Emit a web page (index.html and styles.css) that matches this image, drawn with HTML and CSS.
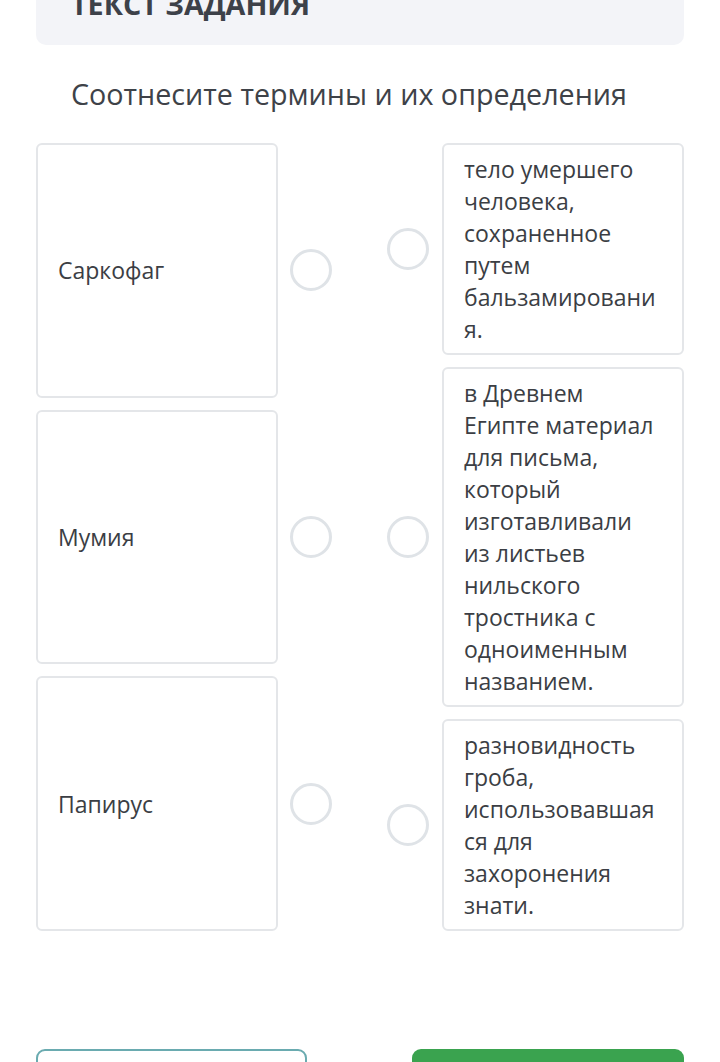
FILE: index.html
```html
<!DOCTYPE html>
<html lang="ru">
<head>
<meta charset="utf-8">
<link rel="stylesheet" href="styles.css">
</head>
<body>
<div class="page">
  <div class="task-head"><span class="task-head-text">ТЕКСТ ЗАДАНИЯ</span></div>
  <div class="task-title">Соотнесите термины и их определения</div>
  <div class="board">
    <div class="side side-left">
      <div class="item">
        <div class="card card-term">Саркофаг</div>
        <span class="dot"></span>
      </div>
      <div class="item">
        <div class="card card-term">Мумия</div>
        <span class="dot"></span>
      </div>
      <div class="item">
        <div class="card card-term">Папирус</div>
        <span class="dot"></span>
      </div>
    </div>
    <div class="side side-right">
      <div class="item">
        <span class="dot"></span>
        <div class="card card-def">тело умершего человека, сохраненное путем бальзамирования.</div>
      </div>
      <div class="item">
        <span class="dot"></span>
        <div class="card card-def">в Древнем Египте материал для письма, который изготавливали из листьев нильского тростника с одноименным названием.</div>
      </div>
      <div class="item">
        <span class="dot"></span>
        <div class="card card-def">разновидность гроба, использовавшаяся для захоронения знати.</div>
      </div>
    </div>
  </div>
  <div class="actions">
    <div class="btn btn-outline"></div>
    <div class="btn btn-green"></div>
  </div>
</div>
</body>
</html>
```
FILE: styles.css
```css
html, body {
  margin: 0;
  padding: 0;
  background: #ffffff;
  overflow: hidden;
}
body {
  font-family: "Open Sans", "Noto Sans", sans-serif;
  color: #3b3e44;
}
.page {
  width: 720px;
  height: 1062px;
  padding: 0 36px;
  box-sizing: border-box;
  overflow: hidden;
}
.task-head {
  margin-top: -40px;
  height: 85px;
  background: #f3f4f8;
  border-radius: 0 0 10px 10px;
  padding: 0 35px 26px;
  box-sizing: border-box;
  display: flex;
  align-items: flex-end;
}
.task-head-text {
  font-size: 28.7px;
  font-weight: 700;
  line-height: 30px;
  white-space: nowrap;
  color: #3d4149;
}
.task-title {
  margin-top: 27px;
  padding-left: 35px;
  font-size: 28.7px;
  line-height: 44px;
  white-space: nowrap;
  color: #3e4248;
}
.board {
  margin-top: 27px;
  display: flex;
  justify-content: space-between;
  align-items: stretch;
}
.side {
  display: flex;
  flex-direction: column;
  gap: 12px;
}
.item {
  display: flex;
  align-items: center;
}
.side-left .item {
  flex: 1;
  gap: 12px;
}
.side-left .card {
  align-self: stretch;
}
.side-right .item {
  gap: 13px;
}
.card {
  width: 242px;
  box-sizing: border-box;
  border: 2px solid #e4e6e9;
  border-radius: 6px;
  background: #fff;
  font-size: 23px;
  line-height: 32px;
  color: #3b3e44;
}
.card-term {
  display: flex;
  align-items: center;
  padding: 0 20px;
}
.card-def {
  padding: 8px 20px 8px 20px;
  overflow-wrap: anywhere;
}
.dot {
  width: 42px;
  height: 42px;
  box-sizing: border-box;
  border: 3px solid #dfe3e7;
  border-radius: 50%;
  flex: none;
}
.actions {
  margin-top: 118px;
  display: flex;
  justify-content: space-between;
}
.btn {
  height: 50px;
  border-radius: 9px;
  box-sizing: border-box;
}
.btn-outline {
  width: 271px;
  border: 2px solid #6aabb0;
}
.btn-green {
  width: 272px;
  background: #3aa34f;
}
```
